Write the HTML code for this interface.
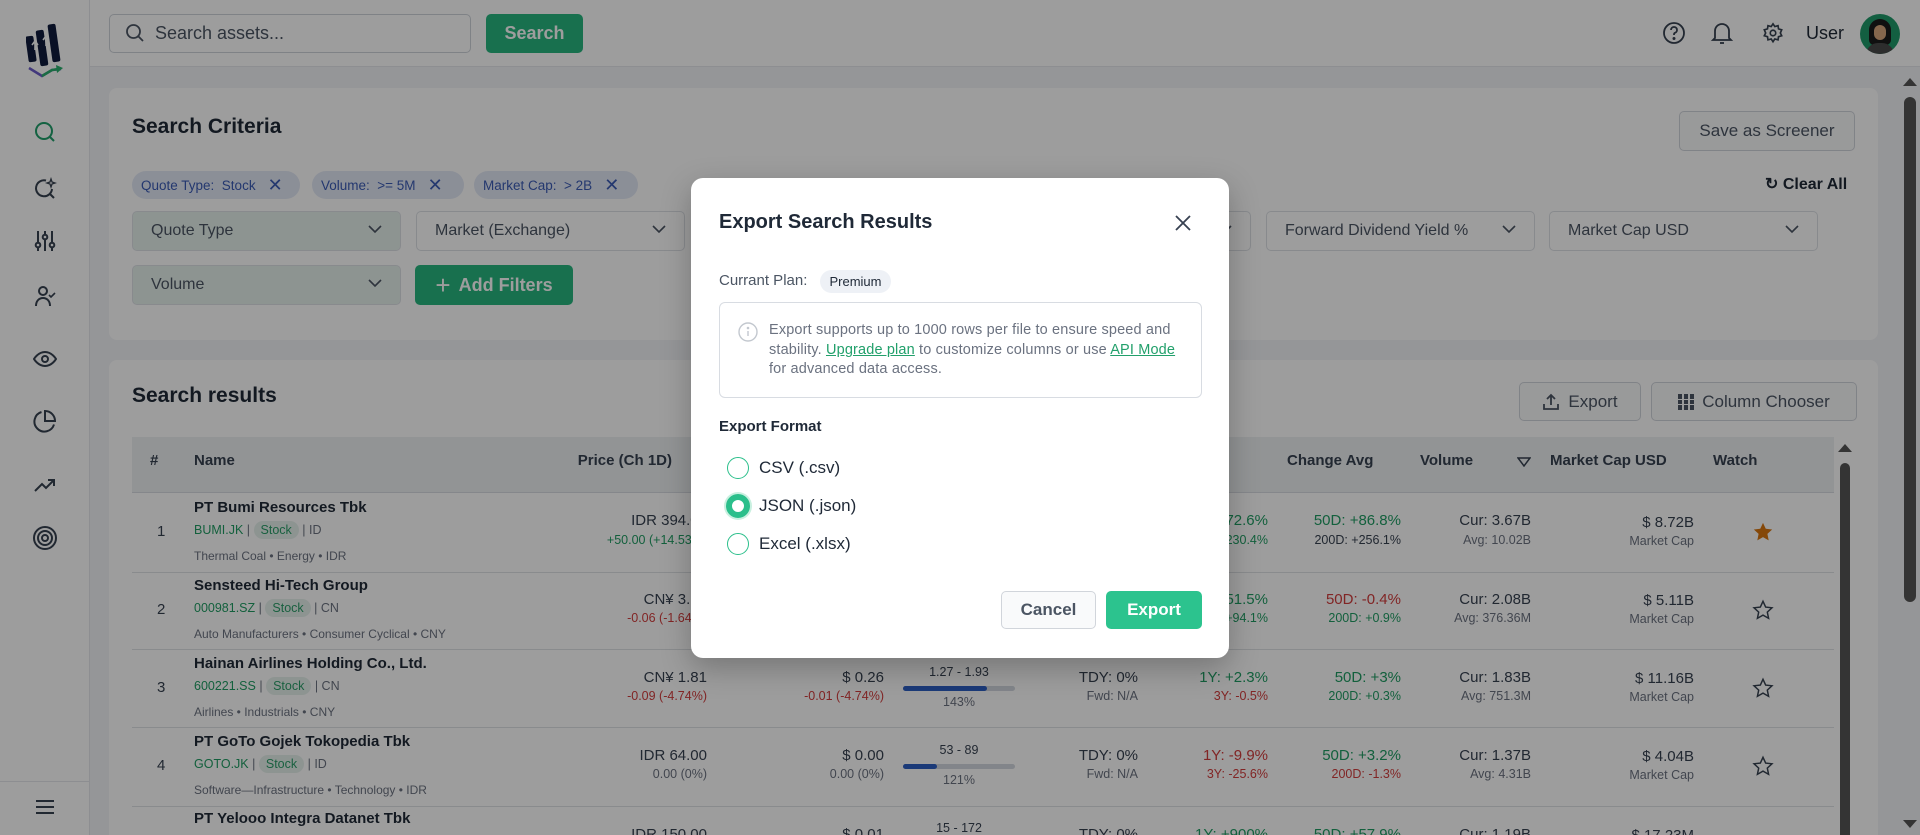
<!DOCTYPE html>
<html><head><meta charset="utf-8"><style>
*{box-sizing:border-box;margin:0;padding:0}
html{overflow:hidden;width:1920px;height:835px}
body{width:1920px;height:835px;overflow:hidden;position:relative;background:#f2f4f7;font-family:"Liberation Sans",sans-serif;color:#1f2937}
.a{position:absolute}
.side{left:0;top:0;width:90px;height:835px;background:#fff;border-right:1px solid #e5e7eb}
.hdr{left:90px;top:0;width:1830px;height:67px;background:#fff;border-bottom:1px solid #e5e7eb}
.card{background:#fff;border-radius:8px}
.btn{border:1px solid #d1d5db;border-radius:5px;background:#f9fafb;color:#4b5563;font-size:17px;display:flex;align-items:center;justify-content:center;gap:8px}
.green{background:#27b67f;color:#fff;border:none;font-weight:bold}
.chip{top:171px;height:28px;background:#e2e8f6;border-radius:14px;color:#3b5bb5;font-size:13.5px;display:flex;align-items:center;padding-left:9px;gap:6px}
.dd{top:211px;height:40px;width:269px;border:1px solid #dde1e6;border-radius:5px;background:#fff;font-size:16px;color:#4b5563;padding-left:18px;display:flex;align-items:center}
.dd.t{background:#e6f1ec}
.dd svg{position:absolute;right:18px;top:13px}
.th{top:452px;font-size:15px;font-weight:bold;color:#374151}
.r{text-align:right}
.nm{font-size:15px;font-weight:bold;color:#1f2937}
.sm{font-size:12.5px;color:#374151}
.md{font-size:15px;color:#374151}
.g{color:#1f9d63}.rd{color:#d23c3c}.m{color:#6b7280}
.badge{background:#e6f1ec;color:#2a9d68;border-radius:10px;padding:2px 7px;font-size:12.5px}
.ov{left:0;top:0;width:1920px;height:835px;background:rgba(0,0,0,0.385)}
.modal{left:691px;top:178px;width:538px;height:480px;background:#fff;border-radius:12px;box-shadow:0 10px 30px rgba(0,0,0,.25)}
.radio{width:22px;height:22px;border:1.5px solid #2bbf8b;border-radius:50%}
</style></head><body>

<div class="a side">
 <svg class="a" style="left:26px;top:22px" width="38" height="56" viewBox="0 0 38 56">
  <rect x="1" y="14" width="8" height="26" rx="2" fill="#0f1b3d" transform="rotate(-8 5 27)"/>
  <rect x="12" y="8" width="8" height="36" rx="2" fill="#0f1b3d" transform="rotate(-8 16 26)"/>
  <rect x="24" y="2" width="8" height="38" rx="2" fill="#0f1b3d" transform="rotate(-8 28 21)"/>
  <path d="M9 28 l0-8 M6 23 l3-4 3 4 M20 24 l0-9 M17 18 l3-4 3 4" stroke="#fff" stroke-width="1.6" fill="none"/>
  <path d="M3 46 L16 54 L26 48 L35 47" stroke="#6b5bc9" stroke-width="2.5" fill="none"/>
  <path d="M16 54 L26 48 L33 47" stroke="#2bb06e" stroke-width="2.5" fill="none"/>
  <path d="M30 43 L37 46 L31 51Z" fill="#2bb06e"/>
 </svg>
 <svg class="a" style="left:33px;top:120px" width="24" height="24" viewBox="0 0 24 24" fill="none" stroke="#22a06b" stroke-width="2"><circle cx="11" cy="11" r="8"/><path d="M17 17l4 4"/></svg>
 <svg class="a" style="left:33px;top:177px" width="24" height="24" viewBox="0 0 24 24" fill="none" stroke="#374151" stroke-width="2"><path d="M13 3.5A8 8 0 1 0 19 12"/><path d="M17 17l4 4"/><path d="M18 2l1 3 3 1-3 1-1 3-1-3-3-1 3-1z" stroke-width="1.3"/></svg>
 <svg class="a" style="left:33px;top:229px" width="24" height="24" viewBox="0 0 24 24" fill="none" stroke="#374151" stroke-width="2"><path d="M5 2v20M12 2v20M19 2v20"/><circle cx="5" cy="16" r="2.3" fill="#fff"/><circle cx="12" cy="8" r="2.3" fill="#fff"/><circle cx="19" cy="16" r="2.3" fill="#fff"/></svg>
 <svg class="a" style="left:33px;top:284px" width="24" height="24" viewBox="0 0 24 24" fill="none" stroke="#374151" stroke-width="2"><circle cx="10" cy="7" r="4"/><path d="M3 22c0-5 3-8 7-8s7 3 7 8"/><path d="M16 11l2 2 4-4" stroke-width="1.6"/></svg>
 <svg class="a" style="left:33px;top:347px" width="24" height="24" viewBox="0 0 24 24" fill="none" stroke="#374151" stroke-width="2"><path d="M1 12s4-7 11-7 11 7 11 7-4 7-11 7S1 12 1 12z"/><circle cx="12" cy="12" r="3"/></svg>
 <svg class="a" style="left:33px;top:409px" width="24" height="24" viewBox="0 0 24 24" fill="none" stroke="#374151" stroke-width="2"><path d="M21 15.5A10 10 0 1 1 8.5 3"/><path d="M22 12A10 10 0 0 0 12 2v10z"/></svg>
 <svg class="a" style="left:33px;top:473px" width="24" height="24" viewBox="0 0 24 24" fill="none" stroke="#374151" stroke-width="2"><path d="M2 18l7-7 4 4 8-8M15 7h6v6"/></svg>
 <svg class="a" style="left:32px;top:525px" width="26" height="26" viewBox="0 0 26 26" fill="none" stroke="#374151" stroke-width="2"><circle cx="13" cy="13" r="11"/><circle cx="13" cy="13" r="7"/><circle cx="13" cy="13" r="3"/></svg>
 <div class="a" style="left:0;top:781px;width:90px;border-top:1px solid #e5e7eb"></div>
 <svg class="a" style="left:35px;top:798px" width="20" height="18" viewBox="0 0 20 18" stroke="#374151" stroke-width="2"><path d="M1 3h18M1 9h18M1 15h18"/></svg>
</div>

<div class="a hdr"></div>
<div class="a" style="left:109px;top:14px;width:362px;height:39px;border:1px solid #cfd4da;border-radius:5px;background:#fff"></div>
<svg class="a" style="left:125px;top:23px" width="20" height="20" viewBox="0 0 20 20" fill="none" stroke="#4b5563" stroke-width="1.8"><circle cx="8.5" cy="8.5" r="6.5"/><path d="M13.5 13.5l4.5 4.5"/></svg>
<div class="a" style="left:155px;top:23px;font-size:18px;color:#4b5563">Search assets...</div>
<div class="a btn green" style="left:486px;top:14px;width:97px;height:39px;font-size:18px">Search</div>
<svg class="a" style="left:1662px;top:21px" width="24" height="24" viewBox="0 0 24 24" fill="none" stroke="#374151" stroke-width="1.8"><circle cx="12" cy="12" r="10"/><path d="M9 9a3 3 0 1 1 4 2.8c-.7.3-1 1-1 1.7V14"/><circle cx="12" cy="17.5" r=".6" fill="#374151"/></svg>
<svg class="a" style="left:1710px;top:20px" width="24" height="26" viewBox="0 0 24 26" fill="none" stroke="#374151" stroke-width="1.8"><path d="M5 18V11a7 7 0 0 1 14 0v7l2 2H3z"/><path d="M10 23h4"/></svg>
<svg class="a" style="left:1762px;top:22px" width="22" height="22" viewBox="0 0 24 24" fill="none" stroke="#374151" stroke-width="1.8"><circle cx="12" cy="12" r="3"/><path d="M12 2l2 3 3.5-1 .5 3.5 3.5 1-1.5 3.5 1.5 3-3.5 1-.5 3.5-3.5-1-2 3-2-3-3.5 1-.5-3.5-3.5-1 1.5-3-1.5-3.5 3.5-1L6.5 4 10 5z"/></svg>
<div class="a" style="left:1806px;top:23px;font-size:18px;color:#1f2937">User</div>
<div class="a" style="left:1860px;top:14px;width:40px;height:40px;border-radius:50%;background:#1f9a6a;overflow:hidden">
 <div class="a" style="left:9px;top:5px;width:22px;height:26px;border-radius:11px 11px 5px 5px;background:#1a1a1a"></div>
 <div class="a" style="left:14px;top:11px;width:12px;height:15px;border-radius:6px;background:#d9a87e"></div>
 <div class="a" style="left:6px;top:29px;width:28px;height:16px;border-radius:12px 12px 0 0;background:#4a4a4a"></div>
</div>

<div class="a" style="left:1900px;top:67px;width:20px;height:768px;background:#f2f4f7"></div>
<div class="a" style="left:1903px;top:78px;width:0;height:0;border-left:7px solid transparent;border-right:7px solid transparent;border-bottom:8px solid #555"></div>
<div class="a" style="left:1904px;top:97px;width:12px;height:505px;border-radius:6px;background:#555"></div>
<div class="a" style="left:1903px;top:820px;width:0;height:0;border-left:7px solid transparent;border-right:7px solid transparent;border-top:8px solid #555"></div>

<div class="a card" style="left:109px;top:88px;width:1769px;height:252px"></div>
<div class="a" style="left:132px;top:115px;font-size:21px;font-weight:bold">Search Criteria</div>
<div class="a btn" style="left:1679px;top:111px;width:176px;height:40px">Save as Screener</div>
<div class="a chip" style="left:132px;width:168px">Quote Type: &nbsp;Stock <span style="font-size:18px;margin-left:6px">✕</span></div>
<div class="a chip" style="left:312px;width:152px">Volume: &nbsp;&gt;= 5M <span style="font-size:18px;margin-left:6px">✕</span></div>
<div class="a chip" style="left:474px;width:164px">Market Cap: &nbsp;&gt; 2B <span style="font-size:18px;margin-left:6px">✕</span></div>
<div class="a" style="left:1765px;top:174px;font-size:16px;font-weight:bold;color:#1f2937">↻ Clear All</div>
<div class="a dd t" style="left:132px">Quote Type<svg width="14" height="9" viewBox="0 0 14 9" fill="none" stroke="#4b5563" stroke-width="1.6"><path d="M1 1l6 6 6-6"/></svg></div>
<div class="a dd" style="left:416px">Market (Exchange)<svg width="14" height="9" viewBox="0 0 14 9" fill="none" stroke="#4b5563" stroke-width="1.6"><path d="M1 1l6 6 6-6"/></svg></div>
<div class="a dd" style="left:699px">Sector<svg width="14" height="9" viewBox="0 0 14 9" fill="none" stroke="#4b5563" stroke-width="1.6"><path d="M1 1l6 6 6-6"/></svg></div>
<div class="a dd" style="left:982px">Industry<svg width="14" height="9" viewBox="0 0 14 9" fill="none" stroke="#4b5563" stroke-width="1.6"><path d="M1 1l6 6 6-6"/></svg></div>
<div class="a dd" style="left:1266px">Forward Dividend Yield %<svg width="14" height="9" viewBox="0 0 14 9" fill="none" stroke="#4b5563" stroke-width="1.6"><path d="M1 1l6 6 6-6"/></svg></div>
<div class="a dd" style="left:1549px">Market Cap USD<svg width="14" height="9" viewBox="0 0 14 9" fill="none" stroke="#4b5563" stroke-width="1.6"><path d="M1 1l6 6 6-6"/></svg></div>
<div class="a dd t" style="left:132px;top:265px">Volume<svg width="14" height="9" viewBox="0 0 14 9" fill="none" stroke="#4b5563" stroke-width="1.6"><path d="M1 1l6 6 6-6"/></svg></div>
<div class="a btn green" style="left:415px;top:265px;width:158px;height:40px;font-size:18px"><span style="font-size:26px;font-weight:normal">+</span> Add Filters</div>

<div class="a card" style="left:109px;top:360px;width:1769px;height:475px;border-radius:8px 8px 0 0"></div>
<div class="a" style="left:132px;top:384px;font-size:21px;font-weight:bold">Search results</div>
<div class="a btn" style="left:1519px;top:382px;width:122px;height:39px"><svg width="18" height="18" viewBox="0 0 18 18" fill="none" stroke="#4b5563" stroke-width="1.8"><path d="M9 12V2M5 6l4-4 4 4M2 11v5h14v-5"/></svg>Export</div>
<div class="a btn" style="left:1651px;top:382px;width:206px;height:39px"><svg width="16" height="16" viewBox="0 0 16 16" fill="#4b5563"><rect x="0" y="0" width="4" height="16"/><rect x="6" y="0" width="4" height="16"/><rect x="12" y="0" width="4" height="16"/><path d="M0 5h16v1H0zM0 10h16v1H0z" fill="#fff"/></svg>Column Chooser</div>
<div class="a" style="left:132px;top:437px;width:1702px;height:56px;background:#eef0f3;border-bottom:1px solid #d8dce2"></div>
<div class="a th" style="left:150px">#</div>
<div class="a th" style="left:194px">Name</div>
<div class="a th r" style="left:500px;width:172px">Price (Ch 1D)</div>
<div class="a th" style="left:1287px">Change Avg</div>
<div class="a th" style="left:1420px">Volume</div>
<svg class="a" style="left:1517px;top:457px" width="14" height="10" viewBox="0 0 14 10" fill="none" stroke="#374151" stroke-width="1.5"><path d="M1 1h12L7 9z"/></svg>
<div class="a th" style="left:1550px">Market Cap USD</div>
<div class="a th" style="left:1713px">Watch</div>
<div class="a" style="left:1838px;top:444px;width:0;height:0;border-left:7px solid transparent;border-right:7px solid transparent;border-bottom:8px solid #555"></div>
<div class="a" style="left:1840px;top:463px;width:10px;height:380px;border-radius:5px;background:#555"></div>

<div class="a" style="left:132px;top:572px;width:1702px;border-top:1px solid #dfe2e6"></div>
<div class="a" style="left:132px;top:649px;width:1702px;border-top:1px solid #dfe2e6"></div>
<div class="a" style="left:132px;top:727px;width:1702px;border-top:1px solid #dfe2e6"></div>
<div class="a" style="left:132px;top:806px;width:1702px;border-top:1px solid #dfe2e6"></div>

<!-- Row 1 -->
<div class="a md" style="left:157px;top:523px">1</div>
<div class="a nm" style="left:194px;top:499px">PT Bumi Resources Tbk</div>
<div class="a sm" style="left:194px;top:523px"><span class="g">BUMI.JK</span> <span class="m">|</span> <span class="badge">Stock</span> <span class="m">| ID</span></div>
<div class="a sm m" style="left:194px;top:549px;font-size:12px">Thermal Coal • Energy • IDR</div>
<div class="a md r" style="left:540px;width:167px;top:512px">IDR 394.00</div>
<div class="a sm g r" style="left:540px;width:167px;top:533px">+50.00 (+14.53%)</div>
<div class="a md r" style="left:760px;width:124px;top:512px">$ 0.02</div>
<div class="a sm g r" style="left:760px;width:124px;top:533px">0.00 (+14.53%)</div>
<div class="a md r g" style="left:1150px;width:118px;top:512px">1Y: +172.6%</div>
<div class="a sm g r" style="left:1150px;width:118px;top:533px">3Y: +230.4%</div>
<div class="a md r g" style="left:1280px;width:121px;top:512px">50D: +86.8%</div>
<div class="a sm r" style="left:1280px;width:121px;top:533px">200D: +256.1%</div>
<div class="a md r" style="left:1410px;width:121px;top:512px">Cur: 3.67B</div>
<div class="a sm r m" style="left:1410px;width:121px;top:533px">Avg: 10.02B</div>
<div class="a md r" style="left:1560px;width:134px;top:514px">$ 8.72B</div>
<div class="a sm r m" style="left:1560px;width:134px;top:534px">Market Cap</div>
<svg class="a" style="left:1752px;top:521px" width="22" height="22" viewBox="0 0 24 24"><path d="M12 2l3 6.5 7 .8-5.2 4.8 1.4 7L12 17.6 5.8 21.1l1.4-7L2 9.3l7-.8z" fill="#d9750f"/></svg>

<!-- Row 2 -->
<div class="a md" style="left:157px;top:601px">2</div>
<div class="a nm" style="left:194px;top:577px">Sensteed Hi-Tech Group</div>
<div class="a sm" style="left:194px;top:601px"><span class="g">000981.SZ</span> <span class="m">|</span> <span class="badge">Stock</span> <span class="m">| CN</span></div>
<div class="a sm m" style="left:194px;top:627px;font-size:12px">Auto Manufacturers • Consumer Cyclical • CNY</div>
<div class="a md r" style="left:540px;width:167px;top:591px">CN¥ 3.60</div>
<div class="a sm rd r" style="left:540px;width:167px;top:611px">-0.06 (-1.64%)</div>
<div class="a md r" style="left:760px;width:124px;top:591px">$ 0.50</div>
<div class="a sm rd r" style="left:760px;width:124px;top:611px">-0.01 (-1.64%)</div>
<div class="a md r g" style="left:1150px;width:118px;top:591px">1Y: +51.5%</div>
<div class="a sm g r" style="left:1150px;width:118px;top:611px">3Y: +94.1%</div>
<div class="a md r rd" style="left:1280px;width:121px;top:591px">50D: -0.4%</div>
<div class="a sm r g" style="left:1280px;width:121px;top:611px">200D: +0.9%</div>
<div class="a md r" style="left:1410px;width:121px;top:591px">Cur: 2.08B</div>
<div class="a sm r m" style="left:1410px;width:121px;top:611px">Avg: 376.36M</div>
<div class="a md r" style="left:1560px;width:134px;top:592px">$ 5.11B</div>
<div class="a sm r m" style="left:1560px;width:134px;top:612px">Market Cap</div>
<svg class="a" style="left:1752px;top:599px" width="22" height="22" viewBox="0 0 24 24"><path d="M12 2.5l2.9 6.3 6.9.8-5.1 4.7 1.4 6.8L12 17.6l-6.1 3.5 1.4-6.8-5.1-4.7 6.9-.8z" fill="none" stroke="#374151" stroke-width="1.6"/></svg>

<!-- Row 3 -->
<div class="a md" style="left:157px;top:679px">3</div>
<div class="a nm" style="left:194px;top:655px">Hainan Airlines Holding Co., Ltd.</div>
<div class="a sm" style="left:194px;top:679px"><span class="g">600221.SS</span> <span class="m">|</span> <span class="badge">Stock</span> <span class="m">| CN</span></div>
<div class="a sm m" style="left:194px;top:705px;font-size:12px">Airlines • Industrials • CNY</div>
<div class="a md r" style="left:540px;width:167px;top:669px">CN¥ 1.81</div>
<div class="a sm rd r" style="left:540px;width:167px;top:689px">-0.09 (-4.74%)</div>
<div class="a md r" style="left:760px;width:124px;top:669px">$ 0.26</div>
<div class="a sm rd r" style="left:760px;width:124px;top:689px">-0.01 (-4.74%)</div>
<div class="a sm" style="left:903px;width:112px;text-align:center;top:665px">1.27 - 1.93</div>
<div class="a" style="left:903px;top:686px;width:112px;height:5px;border-radius:3px;background:#d4d9e0"><div style="width:75%;height:5px;border-radius:3px;background:#2c5fc4"></div></div>
<div class="a sm m" style="left:903px;width:112px;text-align:center;top:695px">143%</div>
<div class="a md r" style="left:1040px;width:98px;top:669px">TDY: 0%</div>
<div class="a sm r m" style="left:1040px;width:98px;top:689px">Fwd: N/A</div>
<div class="a md r g" style="left:1150px;width:118px;top:669px">1Y: +2.3%</div>
<div class="a sm rd r" style="left:1150px;width:118px;top:689px">3Y: -0.5%</div>
<div class="a md r g" style="left:1280px;width:121px;top:669px">50D: +3%</div>
<div class="a sm r g" style="left:1280px;width:121px;top:689px">200D: +0.3%</div>
<div class="a md r" style="left:1410px;width:121px;top:669px">Cur: 1.83B</div>
<div class="a sm r m" style="left:1410px;width:121px;top:689px">Avg: 751.3M</div>
<div class="a md r" style="left:1560px;width:134px;top:670px">$ 11.16B</div>
<div class="a sm r m" style="left:1560px;width:134px;top:690px">Market Cap</div>
<svg class="a" style="left:1752px;top:677px" width="22" height="22" viewBox="0 0 24 24"><path d="M12 2.5l2.9 6.3 6.9.8-5.1 4.7 1.4 6.8L12 17.6l-6.1 3.5 1.4-6.8-5.1-4.7 6.9-.8z" fill="none" stroke="#374151" stroke-width="1.6"/></svg>

<!-- Row 4 -->
<div class="a md" style="left:157px;top:757px">4</div>
<div class="a nm" style="left:194px;top:733px">PT GoTo Gojek Tokopedia Tbk</div>
<div class="a sm" style="left:194px;top:757px"><span class="g">GOTO.JK</span> <span class="m">|</span> <span class="badge">Stock</span> <span class="m">| ID</span></div>
<div class="a sm m" style="left:194px;top:783px;font-size:12px">Software—Infrastructure • Technology • IDR</div>
<div class="a md r" style="left:540px;width:167px;top:747px">IDR 64.00</div>
<div class="a sm r m" style="left:540px;width:167px;top:767px">0.00 (0%)</div>
<div class="a md r" style="left:760px;width:124px;top:747px">$ 0.00</div>
<div class="a sm r m" style="left:760px;width:124px;top:767px">0.00 (0%)</div>
<div class="a sm" style="left:903px;width:112px;text-align:center;top:743px">53 - 89</div>
<div class="a" style="left:903px;top:764px;width:112px;height:5px;border-radius:3px;background:#d4d9e0"><div style="width:30%;height:5px;border-radius:3px;background:#2c5fc4"></div></div>
<div class="a sm m" style="left:903px;width:112px;text-align:center;top:773px">121%</div>
<div class="a md r" style="left:1040px;width:98px;top:747px">TDY: 0%</div>
<div class="a sm r m" style="left:1040px;width:98px;top:767px">Fwd: N/A</div>
<div class="a md r rd" style="left:1150px;width:118px;top:747px">1Y: -9.9%</div>
<div class="a sm rd r" style="left:1150px;width:118px;top:767px">3Y: -25.6%</div>
<div class="a md r g" style="left:1280px;width:121px;top:747px">50D: +3.2%</div>
<div class="a sm r rd" style="left:1280px;width:121px;top:767px">200D: -1.3%</div>
<div class="a md r" style="left:1410px;width:121px;top:747px">Cur: 1.37B</div>
<div class="a sm r m" style="left:1410px;width:121px;top:767px">Avg: 4.31B</div>
<div class="a md r" style="left:1560px;width:134px;top:748px">$ 4.04B</div>
<div class="a sm r m" style="left:1560px;width:134px;top:768px">Market Cap</div>
<svg class="a" style="left:1752px;top:755px" width="22" height="22" viewBox="0 0 24 24"><path d="M12 2.5l2.9 6.3 6.9.8-5.1 4.7 1.4 6.8L12 17.6l-6.1 3.5 1.4-6.8-5.1-4.7 6.9-.8z" fill="none" stroke="#374151" stroke-width="1.6"/></svg>

<!-- Row 5 -->
<div class="a nm" style="left:194px;top:810px">PT Yelooo Integra Datanet Tbk</div>
<div class="a md r" style="left:540px;width:167px;top:826px">IDR 150.00</div>
<div class="a md r" style="left:760px;width:124px;top:826px">$ 0.01</div>
<div class="a sm" style="left:903px;width:112px;text-align:center;top:821px">15 - 172</div>
<div class="a md r" style="left:1040px;width:98px;top:826px">TDY: 0%</div>
<div class="a md r g" style="left:1150px;width:118px;top:826px">1Y: +900%</div>
<div class="a md r g" style="left:1280px;width:121px;top:826px">50D: +57.9%</div>
<div class="a md r" style="left:1410px;width:121px;top:826px">Cur: 1.19B</div>
<div class="a md r" style="left:1560px;width:134px;top:827px">$ 17.23M</div>

<div class="a ov"></div>

<div class="a modal">
 <div class="a" style="left:28px;top:33px;font-size:20px;font-weight:bold;color:#1f2937">Export Search Results</div>
 <svg class="a" style="left:484px;top:37px" width="16" height="16" viewBox="0 0 16 16" stroke="#374151" stroke-width="1.8"><path d="M1 1l14 14M15 1L1 15"/></svg>
 <div class="a" style="left:28px;top:94px;font-size:15px;color:#4b5563">Currant Plan:</div>
 <div class="a" style="left:129px;top:92px;width:71px;height:23px;border-radius:12px;background:#eef1f6;font-size:13px;color:#1f2937;display:flex;align-items:center;justify-content:center">Premium</div>
 <div class="a" style="left:28px;top:124px;width:483px;height:96px;border:1px solid #d8dce2;border-radius:6px"></div>
 <svg class="a" style="left:47px;top:144px" width="20" height="20" viewBox="0 0 20 20" fill="none" stroke="#c3c8cf" stroke-width="1.4"><circle cx="10" cy="10" r="9"/><path d="M10 9v5"/><circle cx="10" cy="6" r=".6" fill="#c3c8cf"/></svg>
 <div class="a" style="left:78px;top:143px;width:425px;font-size:14.5px;line-height:19.5px;color:#6b7280;letter-spacing:0.15px">Export supports up to 1000 rows per file to ensure speed and stability. <span style="color:#22a06b;text-decoration:underline">Upgrade plan</span> to customize columns or use <span style="color:#22a06b;text-decoration:underline">API Mode</span> for advanced data access.</div>
 <div class="a" style="left:28px;top:240px;font-size:15px;font-weight:bold;color:#1f2937">Export Format</div>
 <div class="a radio" style="left:36px;top:279px"></div>
 <div class="a" style="left:68px;top:280px;font-size:17px;color:#1f2937">CSV (.csv)</div>
 <div class="a radio" style="left:35px;top:316px;width:24px;height:24px;border:6px solid #2bbf8b;box-shadow:0 0 0 2px #c9f0e0"></div>
 <div class="a" style="left:68px;top:318px;font-size:17px;color:#1f2937">JSON (.json)</div>
 <div class="a radio" style="left:36px;top:355px"></div>
 <div class="a" style="left:68px;top:356px;font-size:17px;color:#1f2937">Excel (.xlsx)</div>
 <div class="a btn" style="left:310px;top:413px;width:95px;height:38px;font-weight:bold;color:#4b5563">Cancel</div>
 <div class="a btn" style="left:415px;top:413px;width:96px;height:38px;background:#2cc38e;border:none;color:#fff;font-weight:bold">Export</div>
</div>
</body></html>
